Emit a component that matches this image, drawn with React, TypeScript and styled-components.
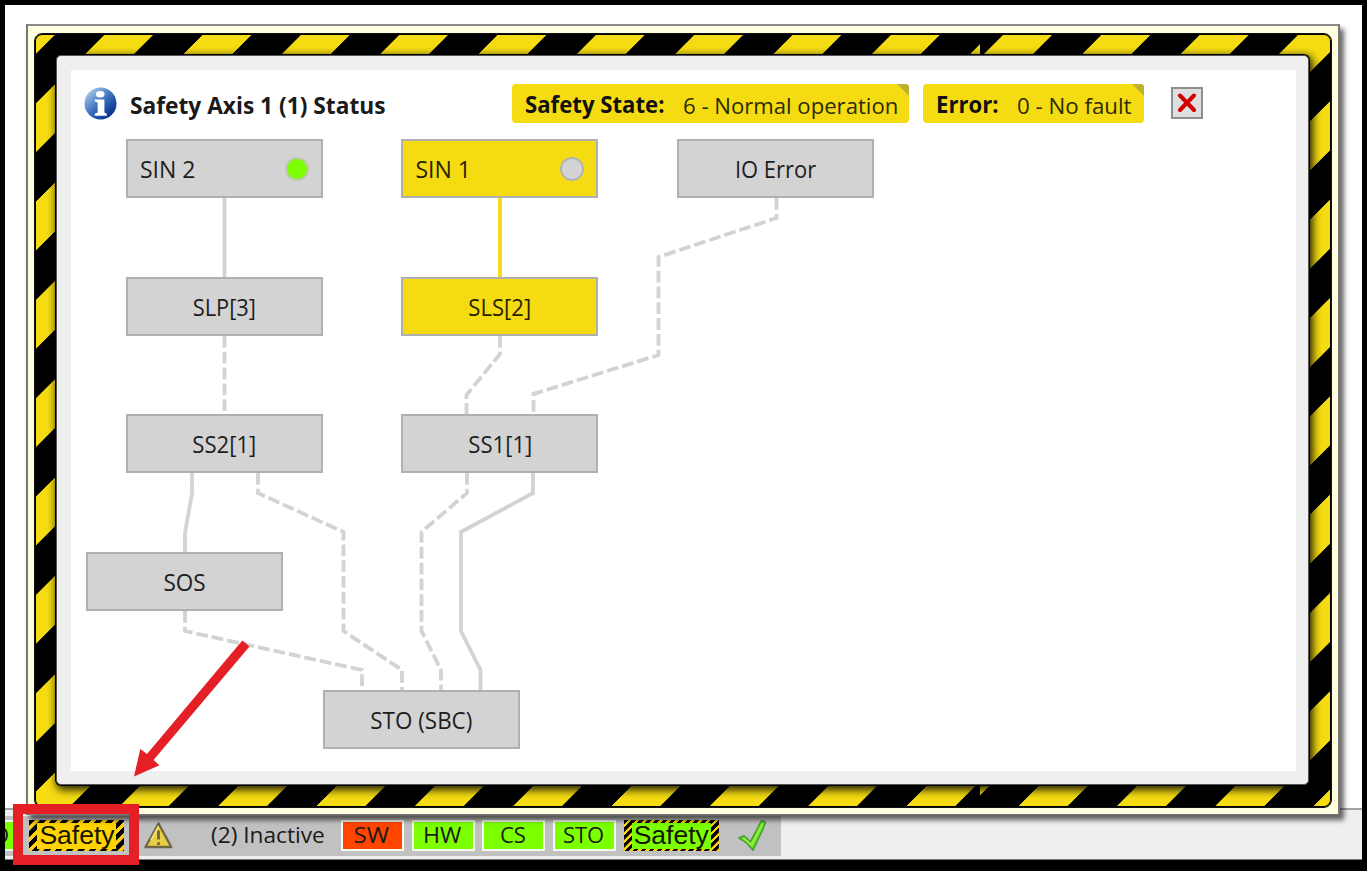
import React from 'react';
import styled, { createGlobalStyle, css } from 'styled-components';

const YELLOW = '#f5dc12';
const GREY = '#d3d3d3';
const LIME = '#7cff00';
const RED = '#e51f26';

const Global = createGlobalStyle`
  * { box-sizing: border-box; }
  body {
    margin: 0;
    background: #000;
    overflow: hidden;
    font-family: 'Open Sans', 'Noto Sans', sans-serif;
    color: #1a1a1a;
  }
`;

const Screen = styled.div`
  position: relative;
  display: flex;
  flex-direction: column;
  width: 1367px;
  height: 871px;
  padding: 5px 5px 11px;
  background: #000;
`;

const Workspace = styled.div`
  flex: 1;
  background: #fff;
`;

const Popup = styled.div`
  position: absolute;
  left: 26px;
  top: 24px;
  width: 1314px;
  height: 791px;
  padding: 7px 6px 6px;
  border: 2px solid #777;
  border-bottom-width: 1px;
  border-top-color: #8a8a8a;
  background: #ffffdf;
  box-shadow: 4px 5px 5px rgba(0, 0, 0, 0.6);
  display: flex;
`;

const Hazard = styled.div`
  flex: 1;
  display: flex;
  padding: 21px 22px 22px 21px;
  border: 1px solid #111;
  border-radius: 8px;
  overflow: hidden;
  background:
    repeating-linear-gradient(135deg, #000 0 16.6px, ${YELLOW} 17.3px 51.3px, #000 52px 69.53px) right top / 351px 100% no-repeat,
    repeating-linear-gradient(135deg, ${YELLOW} 0 14.3px, #000 15px 49.3px, ${YELLOW} 50px 69.53px) left top / 945px 100% no-repeat;
  box-shadow: inset 0 0 0 1px #000;
`;

const Panel = styled.div`
  flex: 1;
  display: flex;
  padding: 14px 12px 13px 14px;
  border: 1px solid #555;
  border-radius: 5px;
  background: #efefef;
  box-shadow: 0 0 0 1px #000, 2px 3px 9px 2px rgba(0, 0, 0, 0.85);
`;

const Sheet = styled.div`
  flex: 1;
  display: flex;
  flex-direction: column;
  background: #fff;
`;

const Header = styled.header`
  display: flex;
  align-items: center;
  height: 69px;
  padding: 0 0 2px 13px;
`;

const Text = styled.span<{ $scale?: number; $size?: number; $bold?: boolean }>`
  display: inline-block;
  white-space: pre;
  font-size: ${p => p.$size ?? 23}px;
  line-height: 32px;
  font-weight: ${p => (p.$bold ? 700 : 400)};
  transform: scaleX(${p => p.$scale ?? 1});
  transform-origin: 0 50%;
`;

const Title = styled.h1`
  width: 382px;
  margin: 3px 0 0 13px;
  font-size: 22px;
  line-height: 32px;
`;

const Field = styled.div<{ $width: number; $label: number }>`
  position: relative;
  display: grid;
  grid-template-columns: ${p => p.$label}px 1fr;
  width: ${p => p.$width}px;
  height: 39px;
  margin: 0 14px 1px 0;
  padding: 5px 0 0 13px;
  border-radius: 4px;
  background: ${YELLOW};
  color: #111;
  overflow: hidden;
  &::after {
    content: '';
    position: absolute;
    top: 0;
    right: 0;
    border: 6.5px solid transparent;
    border-top-color: #bdb22f;
    border-right-color: #bdb22f;
  }
`;

const Value = styled.span`
  padding: 1px 0 0 1px;
  color: #2c2a08;
`;

const CloseButton = styled.button`
  display: flex;
  align-items: center;
  justify-content: center;
  width: 32px;
  height: 32px;
  margin: 0 0 2px 13px;
  padding: 0;
  border: 2px solid #8e8e8e;
  background: #dedede;
`;

const Diagram = styled.div`
  position: relative;
  flex: 1;
`;

const Wires = styled.svg`
  position: absolute;
  inset: 0;
  fill: none;
  stroke: ${GREY};
  stroke-width: 3.8;
`;

const Node = styled.div<{ $x: number; $y: number; $active?: boolean; $input?: boolean }>`
  position: absolute;
  left: ${p => p.$x - 71}px;
  top: ${p => p.$y - 139}px;
  display: flex;
  align-items: center;
  justify-content: center;
  width: 197px;
  height: 59px;
  padding-top: 1px;
  border: 2px solid #b0b0b0;
  background: ${p => (p.$active ? YELLOW : GREY)};
  color: ${p => (p.$active ? '#262400' : '#1e1e1e')};
  ${p => p.$input && css`
    justify-content: space-between;
    padding: 1px 12px 0;
  `}
  & > span { transform-origin: ${p => (p.$input ? '0' : '50%')} 50%; }
`;

const Lamp = styled.i<{ $on?: boolean }>`
  width: 24px;
  height: 24px;
  margin-top: -1px;
  border: 2px solid ${p => (p.$on ? '#bdc9b0' : '#b3b3b3')};
  border-radius: 50%;
  background: ${p => (p.$on ? LIME : GREY)};
`;

const StatusBar = styled.footer`
  display: flex;
  height: 52px;
  padding: 6px 0 4px;
  border-top: 2px solid #a2a2a2;
  border-bottom: 1px solid #777;
  background: #efefef;
`;

const Band = styled.div`
  display: flex;
  align-items: center;
  width: 776px;
  height: 40px;
  padding-bottom: 1px;
  background: #c1c1c1;
  overflow: hidden;
`;

const Chip = styled.div<{ $color: string; $shift?: number }>`
  flex: none;
  display: flex;
  align-items: center;
  justify-content: center;
  width: 63px;
  height: 31px;
  margin-right: 7.7px;
  margin-left: ${p => p.$shift ?? 0}px;
  padding: 0 2px 3px 0;
  border: 2px solid #f4fbef;
  background: ${p => p.$color};
  & > span { transform-origin: 50% 50%; }
`;

const SafetyBadge = styled.div<{ $color: string; $period: number; $nudge?: number }>`
  flex: none;
  width: 95px;
  height: 31px;
  padding: 2.5px 8px;
  background: repeating-linear-gradient(
    135deg,
    #000 0 ${p => p.$period * 0.5}px,
    #ffcf10 ${p => p.$period * 0.56}px ${p => p.$period * 0.95}px,
    #000 ${p => p.$period}px
  );
  & > span {
    display: flex;
    align-items: center;
    justify-content: center;
    height: 26px;
    padding-left: ${p => p.$nudge ?? 0}px;
    background: ${p => p.$color};
    font: 26.5px/24px 'Liberation Sans', Arial, sans-serif;
    padding-bottom: 2px;
    white-space: nowrap;
    color: #151500;
  }
`;

const Slot = styled.div<{ $width: number; $left?: number; $lift?: number }>`
  flex: none;
  display: flex;
  width: ${p => p.$width}px;
  padding-left: ${p => p.$left ?? 0}px;
  padding-bottom: ${p => p.$lift ?? 0}px;
`;

const Callout = styled.div`
  position: absolute;
  left: 13px;
  top: 804px;
  width: 126px;
  height: 61px;
  border: 10px solid ${RED};
`;

const Arrow = styled.svg`
  position: absolute;
  left: 130px;
  top: 636px;
`;

const InfoIcon = () => (
  <svg width="33" height="33" viewBox="0 0 33 33">
    <defs>
      <linearGradient id="info" x1="0.1" y1="0.1" x2="0.85" y2="0.9">
        <stop offset="0" stopColor="#a9cbea" />
        <stop offset="0.5" stopColor="#3d72bd" />
        <stop offset="1" stopColor="#022b88" />
      </linearGradient>
    </defs>
    <circle cx="16.5" cy="16.5" r="16" fill="url(#info)" />
    <ellipse cx="16.2" cy="7.2" rx="4.3" ry="3.2" fill="#fff" />
    <path d="M10.8 12.4H20.4V25.6L22.8 26.8V28.8H10.8V26.8L13.6 25.6V15.4L10.8 14.3Z" fill="#fff" />
  </svg>
);

const WarningIcon = () => (
  <svg width="31" height="29" viewBox="0 0 31 29">
    <path d="M15.5 2.5L28.3 26H2.5Z" fill="#e8cf45" stroke="#6d6848" strokeWidth="2.4" strokeLinejoin="round" />
    <path d="M15.5 5L8 19" stroke="#f4e98f" strokeWidth="1.5" />
    <path d="M15.5 9.5V18.5M15.5 21.3V24" stroke="#6b673c" strokeWidth="2.8" />
  </svg>
);

const CheckIcon = () => (
  <svg width="31" height="33" viewBox="0 0 31 33">
    <path d="M2 19L7 16.8L13.5 22.5L24.5 1.5L28.5 3.2L25.5 11L16 31.2L9.5 23.8Z" fill="#6ee51e" stroke="#459f35" strokeWidth="1.6" strokeLinejoin="round" />
    <path d="M6.5 19.2L14.5 26L25.5 5" fill="none" stroke="#a5f04e" strokeWidth="1.2" />
  </svg>
);

const solid = [
  'M224.5 198V277',
  'M192 473V493L185 533V553',
  'M533 473V493L461 532V631L480.500 670V691',
];

const dashed = [
  'M224.5 336V415',
  'M500 336V354L466.500 395V415',
  'M776.500 198V218L658.500 257V355L533.500 394V415',
  'M258 473V493L343.500 532V631L402 670V691',
  'M467 473V493L421.500 532V631L441 670V691',
  'M185 611V631L362 670V691',
];

export default function App() {
  return (
    <>
      <Global />
      <Screen>
        <Workspace />
        <StatusBar>
          <Band>
            <Chip $color={LIME} $shift={-47}><Text $size={22}>STO</Text></Chip>
            <Slot $width={106.3} $left={0.3}>
              <SafetyBadge $color="#ffd400" $period={8} $nudge={1}><span>Safety</span></SafetyBadge>
            </Slot>
            <Slot $width={76} $left={8.5}><WarningIcon /></Slot>
            <Slot $width={130} $lift={3}><Text $size={22} $scale={1.03}>(2) Inactive</Text></Slot>
            <Chip $color="#ff4500"><Text $size={22} $scale={1.1}>SW</Text></Chip>
            <Chip $color={LIME}><Text $size={22} $scale={1.05}>HW</Text></Chip>
            <Chip $color={LIME}><Text $size={22}>CS</Text></Chip>
            <Chip $color={LIME}><Text $size={22}>STO</Text></Chip>
            <SafetyBadge $color={LIME} $period={5.6}><span>Safety</span></SafetyBadge>
            <Slot $width={50} $left={18.5}><CheckIcon /></Slot>
          </Band>
        </StatusBar>

        <Popup>
          <Hazard>
            <Panel>
              <Sheet>
                <Header>
                  <InfoIcon />
                  <Title><Text $bold $size={22.5} $scale={1.01}>Safety Axis 1 (1) Status</Text></Title>
                  <Field $width={397} $label={157}>
                    <Text $bold $size={22.5} $scale={0.985}>Safety State:</Text>
                    <Value><Text $size={22.5} $scale={0.983}>6 - Normal operation</Text></Value>
                  </Field>
                  <Field $width={221} $label={80}>
                    <Text $bold $size={22.5} $scale={0.985}>Error:</Text>
                    <Value><Text $size={22.5} $scale={0.99}>0 - No fault</Text></Value>
                  </Field>
                  <CloseButton aria-label="Close">
                    <svg width="20" height="20" viewBox="0 0 20 20">
                      <path d="M3 2.500L17 17M17 2.500L3 17" stroke="#d00000" strokeWidth="4" strokeLinecap="round" />
                    </svg>
                  </CloseButton>
                </Header>
                <Diagram>
                  <Wires width="1225" height="632" viewBox="71 139 1225 632">
                    {solid.map(d => <path key={d} d={d} />)}
                    <path d="M500 198V277" stroke={YELLOW} />
                    {dashed.map(d => <path key={d} d={d} strokeDasharray="11.8 4" />)}
                  </Wires>
                  <Node $x={126} $y={139} $input><Text>SIN 2</Text><Lamp $on /></Node>
                  <Node $x={401.4} $y={139} $active $input><Text>SIN 1</Text><Lamp /></Node>
                  <Node $x={677} $y={139}><Text $scale={0.955}>IO Error</Text></Node>
                  <Node $x={126} $y={277}><Text $scale={0.95}>SLP[3]</Text></Node>
                  <Node $x={401.4} $y={277} $active><Text $scale={0.96}>SLS[2]</Text></Node>
                  <Node $x={126} $y={414.4}><Text $scale={0.96}>SS2[1]</Text></Node>
                  <Node $x={401.4} $y={414.4}><Text $scale={0.96}>SS1[1]</Text></Node>
                  <Node $x={86.4} $y={552}><Text $scale={0.98}>SOS</Text></Node>
                  <Node $x={322.6} $y={690}><Text $scale={0.975}>STO (SBC)</Text></Node>
                </Diagram>
              </Sheet>
            </Panel>
          </Hazard>
        </Popup>

        <Callout />
        <Arrow width="122" height="144" viewBox="130 636 122 144">
          <path d="M242.300 640.500L249.500 646.500L153.500 760L159.500 765.300L134 776.500L140.300 749L147 754Z" fill={RED} />
        </Arrow>
      </Screen>
    </>
  );
}
